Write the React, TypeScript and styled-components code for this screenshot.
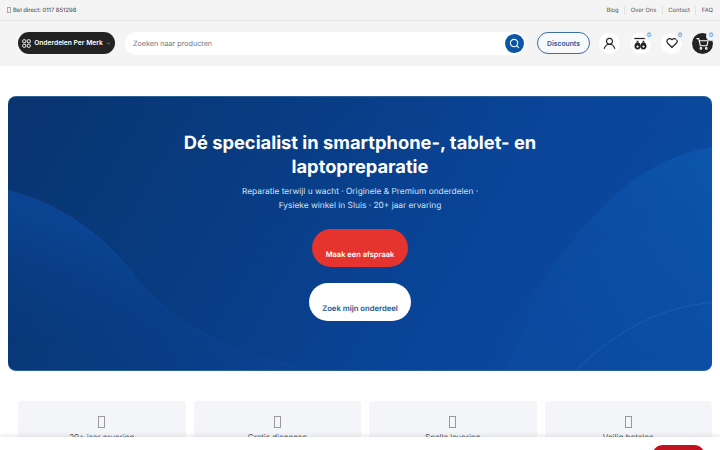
import styled, { createGlobalStyle } from "styled-components"
import { Search, ChevronDown } from "lucide-react"

const GlobalStyle = createGlobalStyle`
    html, body {
        margin: 0;
        padding: 0;
        height: 450px;
        overflow: hidden;
        background: #fff;
        font-family: 'Inter', 'Liberation Sans', sans-serif;
        text-rendering: geometricPrecision;
    }
    #root { height: 450px; overflow: hidden; }
    * { box-sizing: border-box; }
`

const TopBar = styled.div`
    height: 21px;
    background: #f4f4f4;
    border-bottom: 1px solid #e6e6e6;
    display: flex;
    align-items: center;
    justify-content: space-between;
    padding: 0 7px;
    font-size: 5.8px;
    color: #555;
`

const Tofu = styled.span<{ $w: number; $h: number }>`
    display: inline-block;
    width: ${p => p.$w}px;
    height: ${p => p.$h}px;
    border: 1px solid #9a9a9a;
    flex: none;
`

const Phone = styled.div`
    display: flex;
    align-items: center;
    gap: 2px;
    font-weight: 500;
    ${Tofu} { border-color: #aaa; }
`

const TopLinks = styled.nav`
    display: flex;
    align-items: center;
`

const TopLink = styled.a`
    padding: 0 5.5px;
    border-left: 1px solid #e2e2e2;
    line-height: 9px;
    &:first-child { border-left: none; }
    &:last-child { padding-right: 0; }
`

const Header = styled.header`
    height: 45px;
    background: #f4f4f4;
    display: flex;
    align-items: center;
    padding: 0 7px 1px 18px;
`

const BrandButton = styled.button`
    width: 97px;
    height: 22px;
    border: none;
    border-radius: 11px;
    background: #232323;
    color: #fff;
    font: 600 6.7px 'Inter', sans-serif;
    display: flex;
    align-items: center;
    justify-content: center;
    gap: 3px;
    padding: 0;
    margin-right: 10px;
    white-space: nowrap;
`

const SearchBox = styled.div`
    width: 400px;
    height: 23px;
    background: #fff;
    border-radius: 12px;
    display: flex;
    align-items: center;
    justify-content: space-between;
    padding: 0 1px 0 8px;
    font-size: 7.2px;
    color: #777;
    margin-right: 12px;
`

const SearchButton = styled.button`
    width: 19px;
    height: 19px;
    border: none;
    border-radius: 50%;
    background: #0b56a4;
    color: #fff;
    display: flex;
    align-items: center;
    justify-content: center;
    padding: 0;
`

const DiscountButton = styled.button`
    width: 53px;
    height: 22px;
    border: 1px solid #3f6f9f;
    border-radius: 11px;
    background: #f8f9fb;
    color: #1c5a9c;
    font: 600 6.8px 'Inter', sans-serif;
    padding: 0;
    margin-right: 9px;
`

const IconRow = styled.div`
    display: flex;
    gap: 10px;
`

const IconButton = styled.div<{ $dark?: boolean }>`
    position: relative;
    width: 21px;
    height: 21px;
    border-radius: 50%;
    background: ${p => (p.$dark ? "#232323" : "#fff")};
    color: ${p => (p.$dark ? "#fff" : "#222")};
    display: flex;
    align-items: center;
    justify-content: center;
`

const Count = styled.span`
    position: absolute;
    top: -2px;
    right: -3px;
    width: 10px;
    height: 10px;
    border-radius: 50%;
    background: #eef3f8;
    color: #5a8fc0;
    font-size: 6px;
    font-weight: 600;
    line-height: 10px;
    text-align: center;
`

const Main = styled.main`
    padding: 30px 8px 0;
`

const Hero = styled.section`
    position: relative;
    height: 275px;
    border-radius: 8px;
    overflow: hidden;
    background: linear-gradient(120deg, #08346f 0%, #083d84 35%, #0a459a 65%, #0a4ca0 100%);
    border: 1px solid #2a6299;
    border-width: 1px 0;
    display: flex;
    flex-direction: column;
    align-items: center;
    padding-top: 34px;
    color: #fff;
`

const Waves = styled.svg`
    position: absolute;
    inset: 0;
    width: 100%;
    height: 100%;
`

const HeroContent = styled.div`
    position: relative;
    display: flex;
    flex-direction: column;
    align-items: center;
`

const Title = styled.h1`
    margin: 0;
    width: 380px;
    font-size: 18.3px;
    line-height: 24px;
    font-weight: 700;
    text-align: center;
`

const Lead = styled.p`
    margin: 7px 0 0;
    font-size: 8.35px;
    line-height: 13.5px;
    text-align: center;
    color: #d5e2f3;
`

const HeroButton = styled.a<{ $light?: boolean }>`
    display: flex;
    align-items: flex-end;
    justify-content: center;
    height: 38px;
    padding: 0 13.5px 8px;
    margin-top: 16px;
    border-radius: 19px;
    font-size: ${p => (p.$light ? "7.7px" : "7.5px")};
    font-weight: 600;
    white-space: nowrap;
    background: ${p => (p.$light ? "#fff" : "#e5332e")};
    color: ${p => (p.$light ? "#1c5590" : "#fff")};
`

const Cards = styled.div`
    display: grid;
    grid-template-columns: repeat(4, 1fr);
    gap: 8px;
    padding: 30px 8px 0 18px;
`

const Card = styled.div`
    height: 90px;
    background: #f3f5f9;
    border-radius: 4px;
    display: flex;
    flex-direction: column;
    align-items: center;
    padding-top: 15px;
    font-size: 8px;
    color: #555;
    gap: 4px;
`

const BottomBar = styled.div`
    position: fixed;
    left: 0;
    right: 0;
    bottom: 0;
    height: 13px;
    background: #fff;
    box-shadow: 0 -2px 4px rgba(0, 0, 0, 0.08);
`

const BottomButton = styled.div`
    position: absolute;
    top: 8px;
    right: 15px;
    width: 53px;
    height: 22px;
    border-radius: 11px;
    background: #c1121f;
`

const UserIcon = () => (
    <svg width="13" height="13" viewBox="0 0 24 24" fill="none" stroke="currentColor" strokeWidth="2">
        <circle cx="12" cy="8" r="5.5" />
        <path d="M2 22c2-6 6-8.5 10-8.5S20 16 22 22" />
    </svg>
)

const CompareIcon = () => (
    <svg width="15" height="15" viewBox="0 0 24 24" fill="currentColor">
        <path d="M2 3h20v2H2z" />
        <path d="M6 7.5h2.600v2.500H6zM15.400 7.500H18v2.500h-2.600z" />
        <path d="M7.300 10c3 0 5 3.500 5 6.500s-2 5-5 5-5-2-5-5 2-6.500 5-6.500zm0 5a1.800 1.800 0 1 0 0 3.600 1.800 1.800 0 0 0 0-3.600z" fillRule="evenodd" />
        <path d="M16.700 10c3 0 5 3.500 5 6.500s-2 5-5 5-5-2-5-5 2-6.500 5-6.500zm0 5a1.800 1.800 0 1 0 0 3.600 1.800 1.800 0 0 0 0-3.600z" fillRule="evenodd" />
    </svg>
)

const HeartIcon = () => (
    <svg width="12" height="12" viewBox="0 0 24 24" fill="none" stroke="currentColor" strokeWidth="2.4">
        <path d="M12 21 3.500 12.500a5.500 5.500 0 0 1 0-7.800 5.500 5.500 0 0 1 7.800 0l.7.7.7-.7a5.500 5.500 0 0 1 7.800 7.800z" />
    </svg>
)

const CartIcon = () => (
    <svg width="13" height="13" viewBox="0 0 24 24" fill="none" stroke="currentColor" strokeWidth="2">
        <path d="M1 3h4l3 13h12l2.500-9H6" />
        <circle cx="9" cy="21" r="1.500" />
        <circle cx="19" cy="21" r="1.500" />
    </svg>
)

const GridIcon = () => (
    <svg width="9" height="9" viewBox="0 0 24 24" fill="none" stroke="currentColor" strokeWidth="2.4">
        <rect x="2" y="2" width="8" height="8" rx="2" />
        <rect x="14" y="2" width="8" height="8" rx="2" />
        <rect x="2" y="14" width="8" height="8" rx="2" />
        <rect x="14" y="14" width="8" height="8" rx="2" />
    </svg>
)

const usps = ["20+ jaar ervaring", "Gratis diagnose", "Snelle levering", "Veilig betalen"]

export default function App() {
    return <>
        <GlobalStyle />
        <TopBar>
            <Phone><Tofu $w={4} $h={6} />Bel direct: 0117 851298</Phone>
            <TopLinks>
                <TopLink>Blog</TopLink>
                <TopLink>Over Ons</TopLink>
                <TopLink>Contact</TopLink>
                <TopLink>FAQ</TopLink>
            </TopLinks>
        </TopBar>
        <Header>
            <BrandButton><GridIcon />Onderdelen Per Merk<ChevronDown size={5} /></BrandButton>
            <SearchBox>
                Zoeken naar producten
                <SearchButton><Search size={11} strokeWidth={2.4} /></SearchButton>
            </SearchBox>
            <DiscountButton>Discounts</DiscountButton>
            <IconRow>
                <IconButton><UserIcon /></IconButton>
                <IconButton><CompareIcon /><Count>0</Count></IconButton>
                <IconButton><HeartIcon /><Count>0</Count></IconButton>
                <IconButton $dark><CartIcon /><Count>0</Count></IconButton>
            </IconRow>
        </Header>
        <Main>
            <Hero>
                <Waves viewBox="0 0 704 275" preserveAspectRatio="none">
                    <defs>
                        <linearGradient id="leftWave" x1="0.350" y1="0.250" x2="0.100" y2="0.900">
                            <stop offset="0" stopColor="#0c50ab" stopOpacity="0.5" />
                            <stop offset="1" stopColor="#0a3f8c" stopOpacity="0" />
                        </linearGradient>
                        <linearGradient id="rightWave" x1="0" y1="1" x2="1" y2="0">
                            <stop offset="0" stopColor="#0b4da3" stopOpacity="0" />
                            <stop offset="1" stopColor="#0d58b0" stopOpacity="0.8" />
                        </linearGradient>
                    </defs>
                    <path d="M0 94C55 108 95 140 122 174C150 210 190 250 290 272V275H0Z" fill="url(#leftWave)" />
                    <path d="M0 94C55 108 95 140 122 174C150 210 190 250 290 272" fill="none" stroke="#1a62bd" strokeOpacity="0.2" />
                    <path d="M704 50C640 62 600 100 560 150C530 190 490 245 465 275H704Z" fill="url(#rightWave)" />
                    <path d="M704 118C640 122 590 140 555 180C530 210 510 245 495 275H704Z" fill="#0c55ad" fillOpacity="0.18" />
                    <path d="M704 207C650 212 610 235 568 275" fill="none" stroke="#2a72c8" strokeOpacity="0.45" />
                </Waves>
                <HeroContent>
                    <Title>Dé specialist in smartphone-, tablet- en laptopreparatie</Title>
                    <Lead>
                        Reparatie terwijl u wacht · Originele &amp; Premium onderdelen ·<br />
                        Fysieke winkel in Sluis · 20+ jaar ervaring
                    </Lead>
                    <HeroButton>Maak een afspraak</HeroButton>
                    <HeroButton $light>Zoek mijn onderdeel</HeroButton>
                </HeroContent>
            </Hero>
        </Main>
        <Cards>
            {usps.map(label => <Card key={label}>
                <Tofu $w={7} $h={12} />
                {label}
            </Card>)}
        </Cards>
        <BottomBar><BottomButton /></BottomBar>
    </>
}
